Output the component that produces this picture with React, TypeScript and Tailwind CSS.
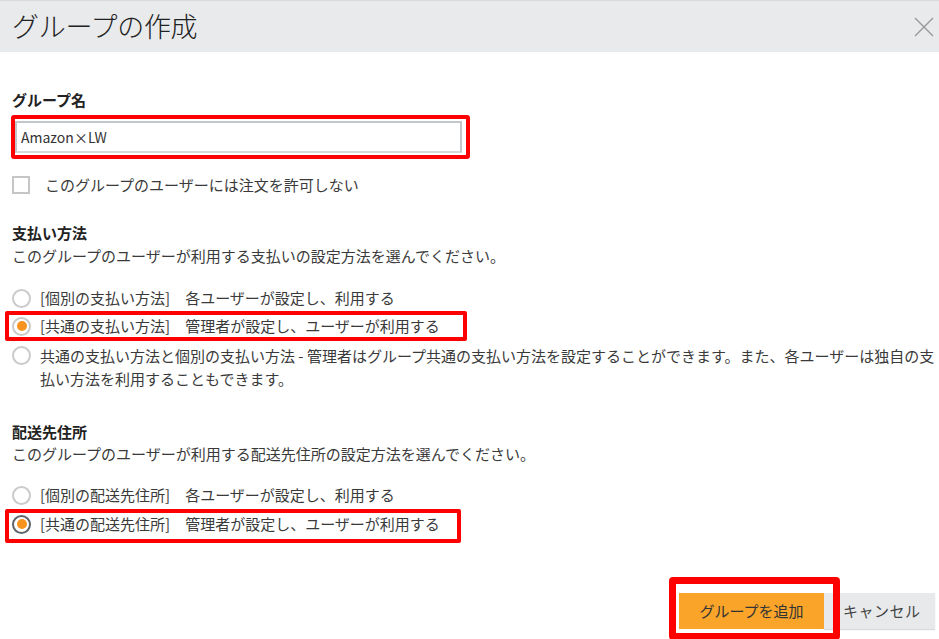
import { useState } from "react";

const font = { fontFamily: '"Noto Sans CJK JP", "Noto Sans", sans-serif' };

function Radio({ checked, focus }: { checked?: boolean; focus?: boolean }) {
  return (
    <span
      className={`flex h-[19px] w-[19px] shrink-0 items-center justify-center rounded-full border-2 bg-white ${
        focus ? "border-[#5f6468]" : "border-[#c9cacc]"
      }`}
    >
      {checked && <span className="h-[10px] w-[10px] rounded-full bg-[#f7931e]" />}
    </span>
  );
}

export default function App() {
  const [name, setName] = useState("Amazon×LW");

  return (
    <div className="h-[639px] w-[939px] overflow-hidden bg-white text-[#3a3a3a]" style={font}>
      {/* ヘッダー */}
      <div className="flex h-[52px] items-center justify-between border-t border-[#d8d9dc] bg-[#e9eaec] pl-[12px] pr-[4px]">
        <h1 className="text-[27px] font-light tracking-[-0.3px] text-[#222]">グループの作成</h1>
        <button className="flex h-[22px] w-[22px] items-center justify-center">
          <svg width="20" height="20" viewBox="0 0 20 20" stroke="#9a9a9a" strokeWidth="1.5">
            <line x1="1" y1="1" x2="19" y2="19" />
            <line x1="19" y1="1" x2="1" y2="19" />
          </svg>
        </button>
      </div>

      <div className="pl-[12px] text-[15px]">
        {/* グループ名 */}
        <div className="mt-[38px] h-[20px] text-[15px] font-bold leading-[20px] text-[#222]">グループ名</div>
        <div className="relative ml-[3px] mt-[11px] h-[32px] w-[447px]">
          <input
            value={name}
            onChange={(e) => setName(e.target.value)}
            className="h-full w-full border-2 border-[#c4c7ca] border-b-[#d6d8da] bg-white pl-[4px] text-[14px] text-[#333] outline-none"
          />
          <div className="pointer-events-none absolute left-[-4px] top-[-6px] h-[44px] w-[459px] rounded-[3px] border-4 border-[#f00]" />
        </div>

        <label className="mt-[23px] flex h-[18px] items-center gap-[15px]">
          <span className="h-[18px] w-[18px] border-2 border-[#c4c6c8] bg-white" />
          <span className="leading-[18px]">このグループのユーザーには注文を許可しない</span>
        </label>

        {/* 支払い方法 */}
        <div className="mt-[28px] h-[22px] font-bold leading-[22px] text-[#222]">支払い方法</div>
        <div className="mt-[1px] h-[22px] leading-[22px]">このグループのユーザーが利用する支払いの設定方法を選んでください。</div>

        <div className="mt-[20px] flex h-[22px] items-center gap-[9px] whitespace-nowrap leading-[22px]">
          <Radio />
          <span>[個別の支払い方法]　各ユーザーが設定し、利用する</span>
        </div>
        <div className="relative mt-[6px] flex h-[22px] items-center gap-[9px] whitespace-nowrap leading-[22px]">
          <Radio checked />
          <span>[共通の支払い方法]　管理者が設定し、ユーザーが利用する</span>
          <div className="pointer-events-none absolute left-[-7px] top-[-4px] h-[30px] w-[462px] rounded-[2px] border-4 border-[#f00]" />
        </div>
        <div className="mt-[7px] flex gap-[9px] whitespace-nowrap leading-[23px]">
          <span className="mt-[2px]">
            <Radio />
          </span>
          <span>
            共通の支払い方法と個別の支払い方法 - 管理者はグループ共通の支払い方法を設定することができます。また、各ユーザーは独自の支
            <br />
            払い方法を利用することもできます。
          </span>
        </div>

        {/* 配送先住所 */}
        <div className="mt-[31px] h-[22px] font-bold leading-[22px] text-[#222]">配送先住所</div>
        <div className="h-[22px] leading-[22px]">このグループのユーザーが利用する配送先住所の設定方法を選んでください。</div>

        <div className="mt-[19px] flex h-[22px] items-center gap-[9px] whitespace-nowrap leading-[22px]">
          <Radio />
          <span>[個別の配送先住所]　各ユーザーが設定し、利用する</span>
        </div>
        <div className="relative mt-[7px] flex h-[22px] items-center gap-[9px] whitespace-nowrap leading-[22px]">
          <Radio checked focus />
          <span>[共通の配送先住所]　管理者が設定し、ユーザーが利用する</span>
          <div className="pointer-events-none absolute left-[-7px] top-[-4px] h-[34px] w-[456px] rounded-[2px] border-4 border-[#f00]" />
        </div>

        {/* ボタン */}
        <div className="mt-[58px] flex justify-end pr-[4px]">
          <div className="relative">
            <button className="h-[36px] w-[145px] bg-[#faa52a] text-[15px] text-[#333]">グループを追加</button>
            <div className="pointer-events-none absolute left-[-10px] top-[-16px] h-[63px] w-[171px] rounded-[4px] border-[7px] border-[#f00]" />
          </div>
          <button className="h-[36px] w-[111px] bg-[#e8e9eb] pl-[19px] text-left text-[15px] tracking-[0.5px] text-[#444] shadow-[0_1px_1px_rgba(0,0,0,0.15)]">
            キャンセル
          </button>
        </div>
      </div>
    </div>
  );
}
